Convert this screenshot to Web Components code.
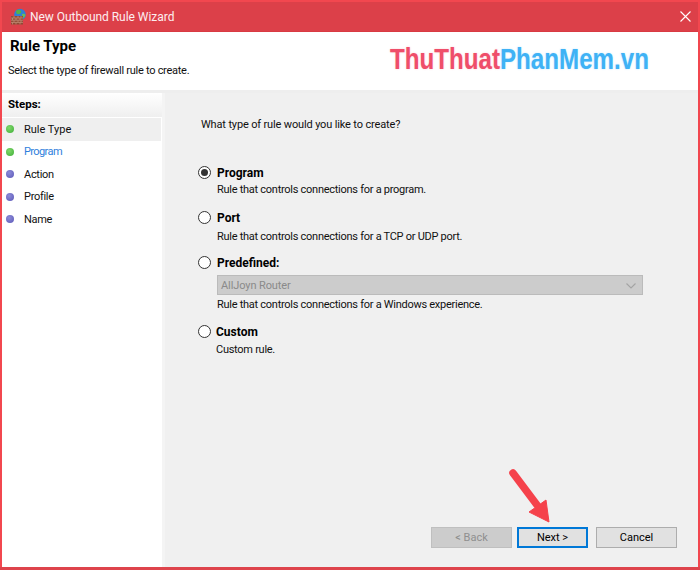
<!DOCTYPE html>
<html><head><meta charset="utf-8"><style>
html,body{margin:0;padding:0;width:700px;height:570px;overflow:hidden;background:#fff}
body{font:11px Roboto,"Liberation Sans",sans-serif;color:#111}
</style></head><body>
<wizard-window>
  <title-bar slot="title">New Outbound Rule Wizard</title-bar>
  <wizard-header slot="header"></wizard-header>
  <step-list slot="steps">
    <step-item state="done" current>Rule Type</step-item>
    <step-item state="done" link>Program</step-item>
    <step-item>Action</step-item>
    <step-item>Profile</step-item>
    <step-item>Name</step-item>
  </step-list>
  <rule-panel slot="main">
    <radio-option label="Program" checked>Rule that controls connections for a program.</radio-option>
    <radio-option label="Port" low>Rule that controls connections for a TCP or UDP port.</radio-option>
    <radio-option label="Predefined:"><select-box>AllJoyn Router</select-box>Rule that controls connections for a Windows experience.</radio-option>
    <radio-option label="Custom" tight>Custom rule.</radio-option>
    <wiz-button slot="footer" disabled>&lt; Back</wiz-button>
    <wiz-button slot="footer" focused>Next &gt;</wiz-button>
    <wiz-button slot="footer" cancel>Cancel</wiz-button>
  </rule-panel>
  <red-arrow slot="overlay"></red-arrow>
</wizard-window>
<script>
function def(name,html,init){
  customElements.define(name,class extends HTMLElement{
    constructor(){super();this.attachShadow({mode:'open'}).innerHTML=html;}
    connectedCallback(){if(init)init(this);}
  });
}
def('wizard-window',`<style>
:host{display:flex;flex-direction:column;box-sizing:border-box;width:700px;height:570px;position:relative;border:2px solid #f2474f;border-bottom:0;background:#fff}
.body{flex:1;display:flex;min-height:0;gap:3px;background:#f4f4f4}
.bottom{height:3px;margin:0 -2px;background:#de444c;flex:none}
</style><slot name="title"></slot><slot name="header"></slot><div class="body"><slot name="steps"></slot><slot name="main"></slot></div><div class="bottom"></div><slot name="overlay"></slot>`);
def('title-bar',`<style>
:host{display:flex;align-items:center;height:30px;flex:none;background:#dc4049;color:#fdeef0;font-size:12px;box-sizing:border-box;padding:0 0 0 8px;border-bottom:1px solid #d93a43;letter-spacing:-.04px}
svg{flex:none;margin-right:3px}
.t{flex:1}
.x{flex:none;margin-right:7px;display:block}
</style>
<svg width="17" height="17" viewBox="0 0 17 17">
<circle cx="10" cy="6.5" r="5.8" fill="#2f7fd6"/><path d="M6 3c2-2 4-1.500 5 0s-1 3-2 3-3 1-3-3z" fill="#56b04a"/><path d="M12 6c1.500-.5 3 0 3.500 1-.5 2-2 3-3 3z" fill="#6dbb58"/>
<rect x="1" y="8" width="12" height="8.500" fill="#8f4a36"/>
<path d="M1 10h12M1 12.200h12M1 14.400h12M4 8v2M8 8v2M11 8v2M2.500 10v2.200M6 10v2.200M10 10v2.200M4 12.200v2.200M8 12.200v2.200M11 12.200v2.200M2.500 14.400v2M6 14.400v2M10 14.400v2" stroke="#c9937d" stroke-width=".7" fill="none"/>
</svg><span class="t"><slot></slot></span>
<svg class="x" width="11" height="11" viewBox="0 0 11 11"><path d="M.5.500l10 10M10.500.500l-10 10" stroke="#fff" stroke-width="1.100"/></svg>`);
def('wizard-header',`<style>
:host{display:block;position:relative;flex:none;height:58px;background:#fff;border-bottom:3px solid #eee;box-sizing:content-box}
h1{margin:0;font-size:15px;font-weight:700;color:#000;position:absolute;left:8px;top:4px;line-height:20px;letter-spacing:-.03px}
p{margin:0;font-size:11px;position:absolute;left:6px;top:30px;line-height:18px;letter-spacing:-.27px}
.logo{position:absolute;left:388px;top:9px;width:259px;font:700 30px/36px "Liberation Sans",sans-serif;color:#ef4e6a;white-space:nowrap;transform:scaleX(.805);transform-origin:0 50%;text-shadow:0 0 2px rgba(239,78,106,.3)}
.logo b{color:#3fb2f5;font-weight:700;text-shadow:0 0 2px rgba(63,178,245,.35)}
</style><h1>Rule Type</h1><p>Select the type of firewall rule to create.</p><div class="logo">ThuThuat<b>PhanMem.vn</b></div>`);
def('step-list',`<style>
:host{display:flex;flex-direction:column;flex:none;width:160px;background:#fff}
.h{height:25px;flex:none;box-sizing:border-box;padding:0 0 0 6px;font-size:11.500px;font-weight:700;line-height:23px;background:linear-gradient(#fff,#efefef);color:#000;border-bottom:1px solid #fff}
</style><div class="h">Steps:</div><slot></slot>`);
def('step-item',`<style>
:host{display:flex;align-items:center;height:22.500px;padding-left:4px;margin-right:1px;letter-spacing:-.3px}
:host([current]){background:#efefef;letter-spacing:0}
:host([link]){color:#2f7fdc;letter-spacing:-.6px}
i{width:8px;height:8px;border-radius:50%;margin-right:10px;flex:none;background:radial-gradient(circle at 40% 35%,#8d8bd8,#5b58b8)}
:host([state=done]) i{background:radial-gradient(circle at 40% 35%,#7fd86a,#3fae38)}
</style><i></i><slot></slot>`);
def('rule-panel',`<style>
:host{display:flex;flex-direction:column;flex:1;min-width:0;background:#f0f0f0;box-sizing:border-box;padding:23px 21px 19px 36px}
.q{line-height:18px;margin-bottom:30px;letter-spacing:-.15px}
.opts{flex:1;display:flex;flex-direction:column}
.f{display:flex;gap:5px;flex:none}
::slotted(wiz-button:last-child){margin-left:3px}
</style><div class="q">What type of rule would you like to create?</div><div class="opts"><slot></slot></div><div class="f"><slot name="footer"></slot></div>`);
def('radio-option',`<style>
:host{display:grid;grid-template-columns:16px 1fr;font-size:11px;letter-spacing:-.27px;margin:0 0 9px -2px;line-height:18px}
:host([tight]){margin-top:0}
.r{width:13px;height:13px;box-sizing:border-box;border:1px solid #333;border-radius:50%;background:#fff;display:flex;align-items:center;justify-content:center;margin-top:2px;margin-left:-2px;transform:translateX(1px)}
:host([checked]) .r::after{content:"";width:7px;height:7px;border-radius:50%;background:#333}
.l{font-size:12px;letter-spacing:0;font-weight:700;color:#000;grid-column:2;grid-row:1;margin-left:2px}
.d{grid-column:2;margin-left:2px}
:host([checked]) .d{margin:-1px 0 1px 2px}
:host([low]) .d{margin:1px 0 -1px 2px}
:host([tight]) .l,:host([tight]) .d{margin-left:1px}
</style><span class="r"></span><span class="l"></span><div class="d"><slot></slot></div>`,
el=>{el.shadowRoot.querySelector('.l').textContent=el.getAttribute('label');});
def('select-box',`<style>
:host{display:flex;align-items:center;justify-content:space-between;box-sizing:border-box;width:426px;height:20px;margin:3px 0 1px;background:#ccc;border:1px solid #bbb;color:#8a8a8a;padding:1px 6px 0 3px;line-height:17px;letter-spacing:-.1px}
</style><slot></slot><svg width="10" height="6" viewBox="0 0 10 6"><path d="M.5.500l4.500 4.500 4.500-4.500" fill="none" stroke="#a4a4a4" stroke-width="1.100"/></svg>`);
def('wiz-button',`<style>
:host{display:flex;align-items:center;justify-content:center;box-sizing:border-box;width:81px;height:21px;background:#e1e1e1;border:1px solid #adadad;color:#000}
:host([disabled]){background:#ccc;border-color:#bfbfbf;color:#8f8f8f;margin-left:auto}
:host([focused]){width:71px;border:2px solid #0078d7}
</style><slot></slot>`);
def('red-arrow',`<style>
:host{display:block;position:absolute;left:-2px;top:-2px;width:700px;height:570px;pointer-events:none}
</style><svg width="700" height="570" viewBox="0 0 700 570"><path d="M513 473L537 505" stroke="#f5424b" stroke-width="7.500" stroke-linecap="round"/><path d="M529 512L546 500L549 522Z" fill="#f5424b" stroke="#f5424b" stroke-width="1"/></svg>`);
</script>
</body></html>
